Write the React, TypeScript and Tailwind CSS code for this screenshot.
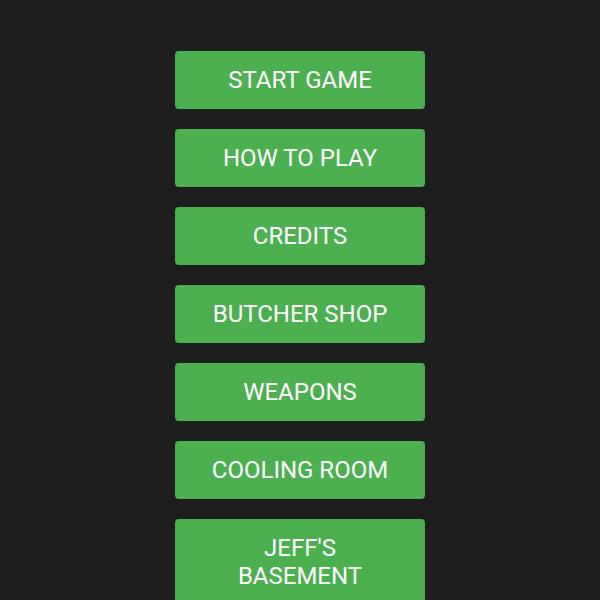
const items = [
  'START GAME',
  'HOW TO PLAY',
  'CREDITS',
  'BUTCHER SHOP',
  'WEAPONS',
  'COOLING ROOM',
  "JEFF'S BASEMENT",
];

export default function App() {
  return (
    <div
      className="min-h-screen bg-[#1e1e1e] flex flex-col items-center gap-5 pt-[51px] pb-10"
      style={{ fontFamily: 'Roboto, "Liberation Sans", sans-serif' }}
    >
      {items.map((label) => (
        <button
          key={label}
          className="w-[250px] min-h-[58px] px-8 py-[15px] rounded bg-[#4caf50] text-white text-[24px] leading-[28px]"
        >
          {label}
        </button>
      ))}
    </div>
  );
}
